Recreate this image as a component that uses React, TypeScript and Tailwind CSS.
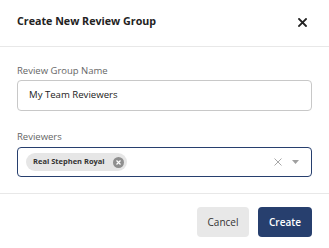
import React from 'react';

const navy = 'bg-[#273f6e]';

export default function App() {
  return (
    <div className="w-[329px] h-[248px] bg-white font-['Open_Sans',sans-serif] text-[#222]">
      {/* header */}
      <div className="h-[47px] px-[17px] pt-[13px] flex items-start justify-between border-b border-[#e8e8e8]">
        <h2 className="text-[10.7px] leading-[16px] font-bold text-[#222]">Create New Review Group</h2>
        <button className="mt-[5px] mr-[5px] text-[#222]" aria-label="Close">
          <svg width="9" height="9" viewBox="0 0 9 9" fill="none" stroke="currentColor" strokeWidth="1.8" strokeLinecap="square">
            <path d="M1 1L8 8M8 1L1 8" />
          </svg>
        </button>
      </div>

      {/* body */}
      <div className="px-[17px] pt-[17px] pb-[16px] flex flex-col">
        <label className="text-[9.5px] leading-[13px] text-[#666]">Review Group Name</label>
        <div className="mt-[3px] h-[31px] rounded-[4px] border border-[#c8c8c8] flex items-center px-[11px] text-[9.6px] text-[#222]">
          My Team Reviewers
        </div>

        <label className="mt-[19px] text-[9.5px] leading-[13px] text-[#666]">Reviewers</label>
        <div className="mt-[4px] h-[30px] rounded-[4px] border border-[#273f6e] flex items-center pl-[8px] pr-[12px]">
          <span className="h-[18px] rounded-full bg-[#e6e6e6] flex items-center pl-[7px] pr-[3px] gap-[8px]">
            <span className="text-[7.5px] font-bold text-[#333]">Real Stephen Royal</span>
            <span className="w-[11px] h-[11px] rounded-full bg-[#8f8f8f] flex items-center justify-center">
              <svg width="5" height="5" viewBox="0 0 5 5" stroke="white" strokeWidth="1.2">
                <path d="M0.5 0.5L4.5 4.5M4.5 0.5L0.5 4.5" />
              </svg>
            </span>
          </span>
          <span className="ml-auto flex items-center gap-[10px]">
            <svg width="8" height="8" viewBox="0 0 8 8" stroke="#a8a8a8" strokeWidth="1">
              <path d="M0.5 0.5L7.5 7.5M7.5 0.5L0.5 7.5" />
            </svg>
            <svg width="7" height="4" viewBox="0 0 7 4" fill="#a0a0a0">
              <path d="M0 0H7L3.5 4Z" />
            </svg>
          </span>
        </div>
      </div>

      {/* footer */}
      <div className="border-t border-[#e8e8e8] pt-[13px] pr-[17px] flex justify-end gap-[9px]">
        <button className="h-[30px] w-[52px] rounded-[4px] bg-[#e8e8e8] text-[10px] font-medium text-[#333]">Cancel</button>
        <button className={`h-[30px] w-[54px] rounded-[4px] ${navy} text-[10px] font-semibold text-white`}>Create</button>
      </div>
    </div>
  );
}
